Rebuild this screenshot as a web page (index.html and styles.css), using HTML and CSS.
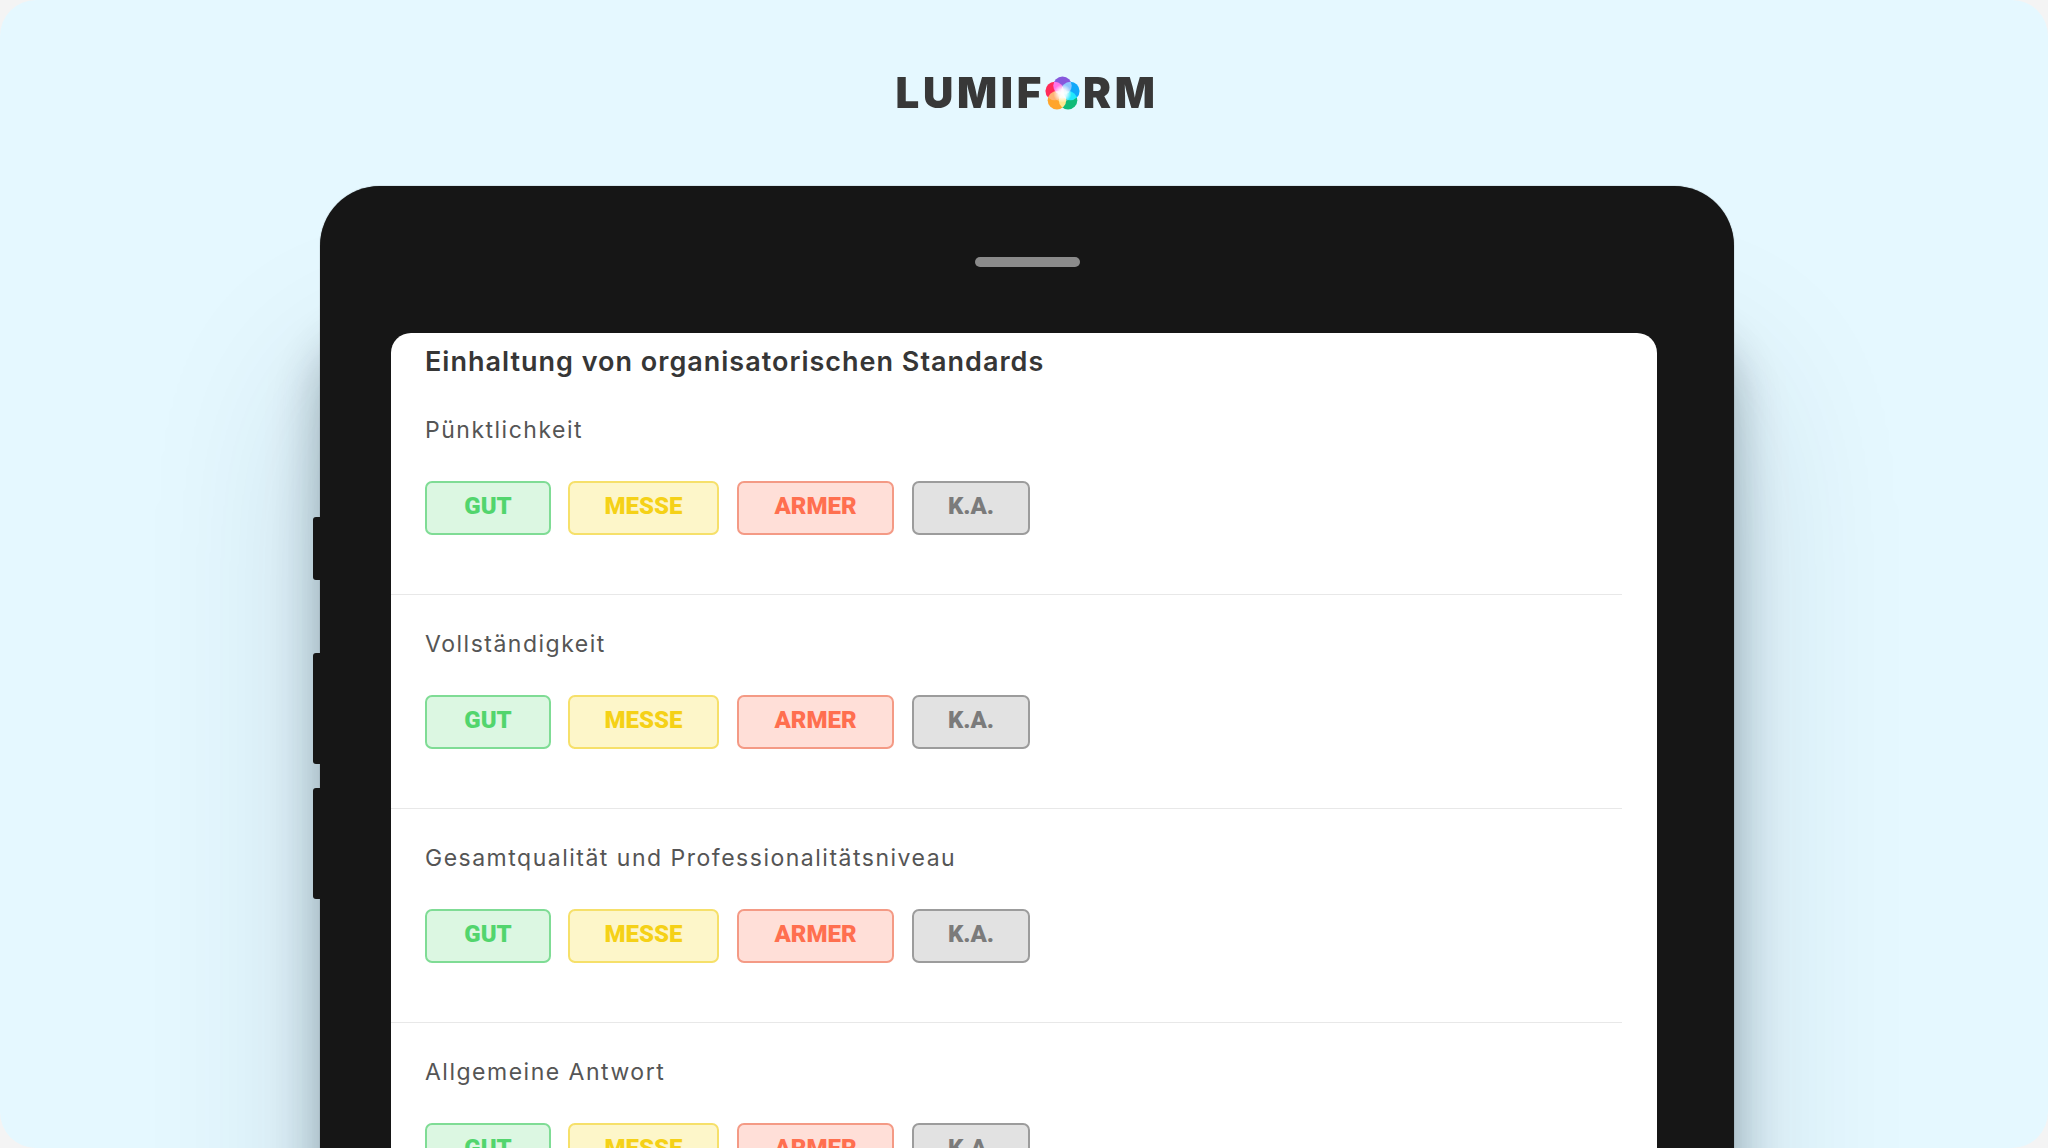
FILE: index.html
```html
<!DOCTYPE html>
<html lang="de">
<head>
<meta charset="utf-8">
<title>Lumiform</title>
<link rel="stylesheet" href="styles.css">
</head>
<body>
<div class="page">
  <header class="logo">
    <span class="logo-text">LUMIF</span>
    <svg class="logo-mark" viewBox="0 0 34 34" aria-hidden="true">
      <defs>
        <radialGradient id="glow">
          <stop offset="0" stop-color="#fff"/>
          <stop offset="0.45" stop-color="#fff" stop-opacity="0.85"/>
          <stop offset="1" stop-color="#fff" stop-opacity="0"/>
        </radialGradient>
      </defs>
      <g class="petals">
        <circle cx="17" cy="9.5" r="9" fill="#8658dc"/>
        <circle cx="24.6" cy="14.6" r="9" fill="#12a8fa"/>
        <circle cx="22.4" cy="23.6" r="9" fill="#10bb78"/>
        <circle cx="11.6" cy="23.6" r="9" fill="#ffa52c"/>
        <circle cx="9.4" cy="14.6" r="9" fill="#ff2a58"/>
      </g>
      <circle cx="17" cy="17" r="9" fill="url(#glow)"/>
    </svg>
    <span class="logo-text">RM</span>
  </header>
  <div class="device">
    <span class="side-btn side-btn-a"></span>
    <span class="side-btn side-btn-b"></span>
    <span class="side-btn side-btn-c"></span>
    <div class="speaker"></div>
    <main class="screen">
      <h1 class="title">Einhaltung von organisatorischen Standards</h1>
      <section class="row">
        <p class="label">Pünktlichkeit</p>
        <div class="options">
          <span class="opt good">GUT</span><span class="opt fair">MESSE</span><span class="opt poor">ARMER</span><span class="opt na">K.A.</span>
        </div>
      </section>
      <section class="row">
        <p class="label">Vollständigkeit</p>
        <div class="options">
          <span class="opt good">GUT</span><span class="opt fair">MESSE</span><span class="opt poor">ARMER</span><span class="opt na">K.A.</span>
        </div>
      </section>
      <section class="row">
        <p class="label">Gesamtqualität und Professionalitätsniveau</p>
        <div class="options">
          <span class="opt good">GUT</span><span class="opt fair">MESSE</span><span class="opt poor">ARMER</span><span class="opt na">K.A.</span>
        </div>
      </section>
      <section class="row">
        <p class="label">Allgemeine Antwort</p>
        <div class="options">
          <span class="opt good">GUT</span><span class="opt fair">MESSE</span><span class="opt poor">ARMER</span><span class="opt na">K.A.</span>
        </div>
      </section>
    </main>
  </div>
</div>
</body>
</html>
```
FILE: styles.css
```css
* { box-sizing: border-box; }
html, body { margin: 0; height: 100%; }
body { background: #f4f4f4; overflow: hidden; }
.page {
  width: 2048px;
  height: 1148px;
  background: #e5f8ff;
  border-radius: 36px;
  overflow: hidden;
  padding-top: 71px;
}
.logo {
  height: 44px;
  display: flex;
  justify-content: center;
  align-items: center;
  padding-left: 6px;
  color: #383838;
}
.logo-text {
  font: 900 42px/44px Inter, sans-serif;
  letter-spacing: 3.7px;
}
.logo-mark { width: 35px; height: 35px; margin: 0 3px 0 0; }
.petals { isolation: isolate; }
.petals circle { mix-blend-mode: screen; }
.device {
  position: relative;
  width: 1414px;
  height: 1300px;
  margin: 71px 0 0 320px;
  background: #161616;
  border-radius: 60px;
  padding-top: 71px;
  box-shadow:
    0 0 1px rgba(20, 20, 20, 0.7),
    0 150px 50px rgba(20, 40, 50, 0.34),
    0 190px 170px rgba(20, 50, 70, 0.17);
}
.side-btn {
  position: absolute;
  left: -7px;
  width: 8px;
  background: #161616;
  border-radius: 3px 0 0 3px;
}
.side-btn-a { top: 331px; height: 63px; }
.side-btn-b { top: 467px; height: 111px; }
.side-btn-c { top: 602px; height: 111px; }
.speaker {
  width: 105px;
  height: 10px;
  margin-left: 655px;
  background: #8b8b8b;
  border-radius: 5px;
}
.screen {
  width: 1266px;
  height: 1200px;
  margin: 66px 0 0 71px;
  background: #fff;
  border-radius: 20px;
  padding-top: 11px;
}
.title {
  margin: 0;
  height: 37px;
  padding-left: 34px;
  font: 600 27px/36px Inter, sans-serif;
  letter-spacing: 1px;
  color: #363636;
}
.row {
  height: 214px;
  width: 1231px;
  padding: 33px 0 0 34px;
  border-bottom: 1px solid #e8e8e8;
}
.label {
  margin: 0;
  height: 32px;
  font: 400 23px/32px Inter, sans-serif;
  letter-spacing: 1.5px;
  color: #555;
}
.options {
  display: flex;
  gap: 17px;
  margin-top: 35px;
}
.opt {
  height: 54px;
  display: flex;
  align-items: center;
  justify-content: center;
  padding-bottom: 4px;
  border: 2px solid;
  border-radius: 7px;
  font: 900 24px/1 Roboto, sans-serif;
}
.good { width: 126px; background: #dcf7e2; border-color: #7fdc95; color: #52d56d; }
.fair { width: 151px; background: #fdf6c9; border-color: #f6e06a; color: #f5d117; }
.poor { width: 157px; margin-left: 1px; background: #ffdfd8; border-color: #f49a85; color: #ff6f4f; }
.na { width: 118px; margin-left: 1px; background: #e2e2e2; border-color: #9c9c9c; color: #7b7b7b; }
```
